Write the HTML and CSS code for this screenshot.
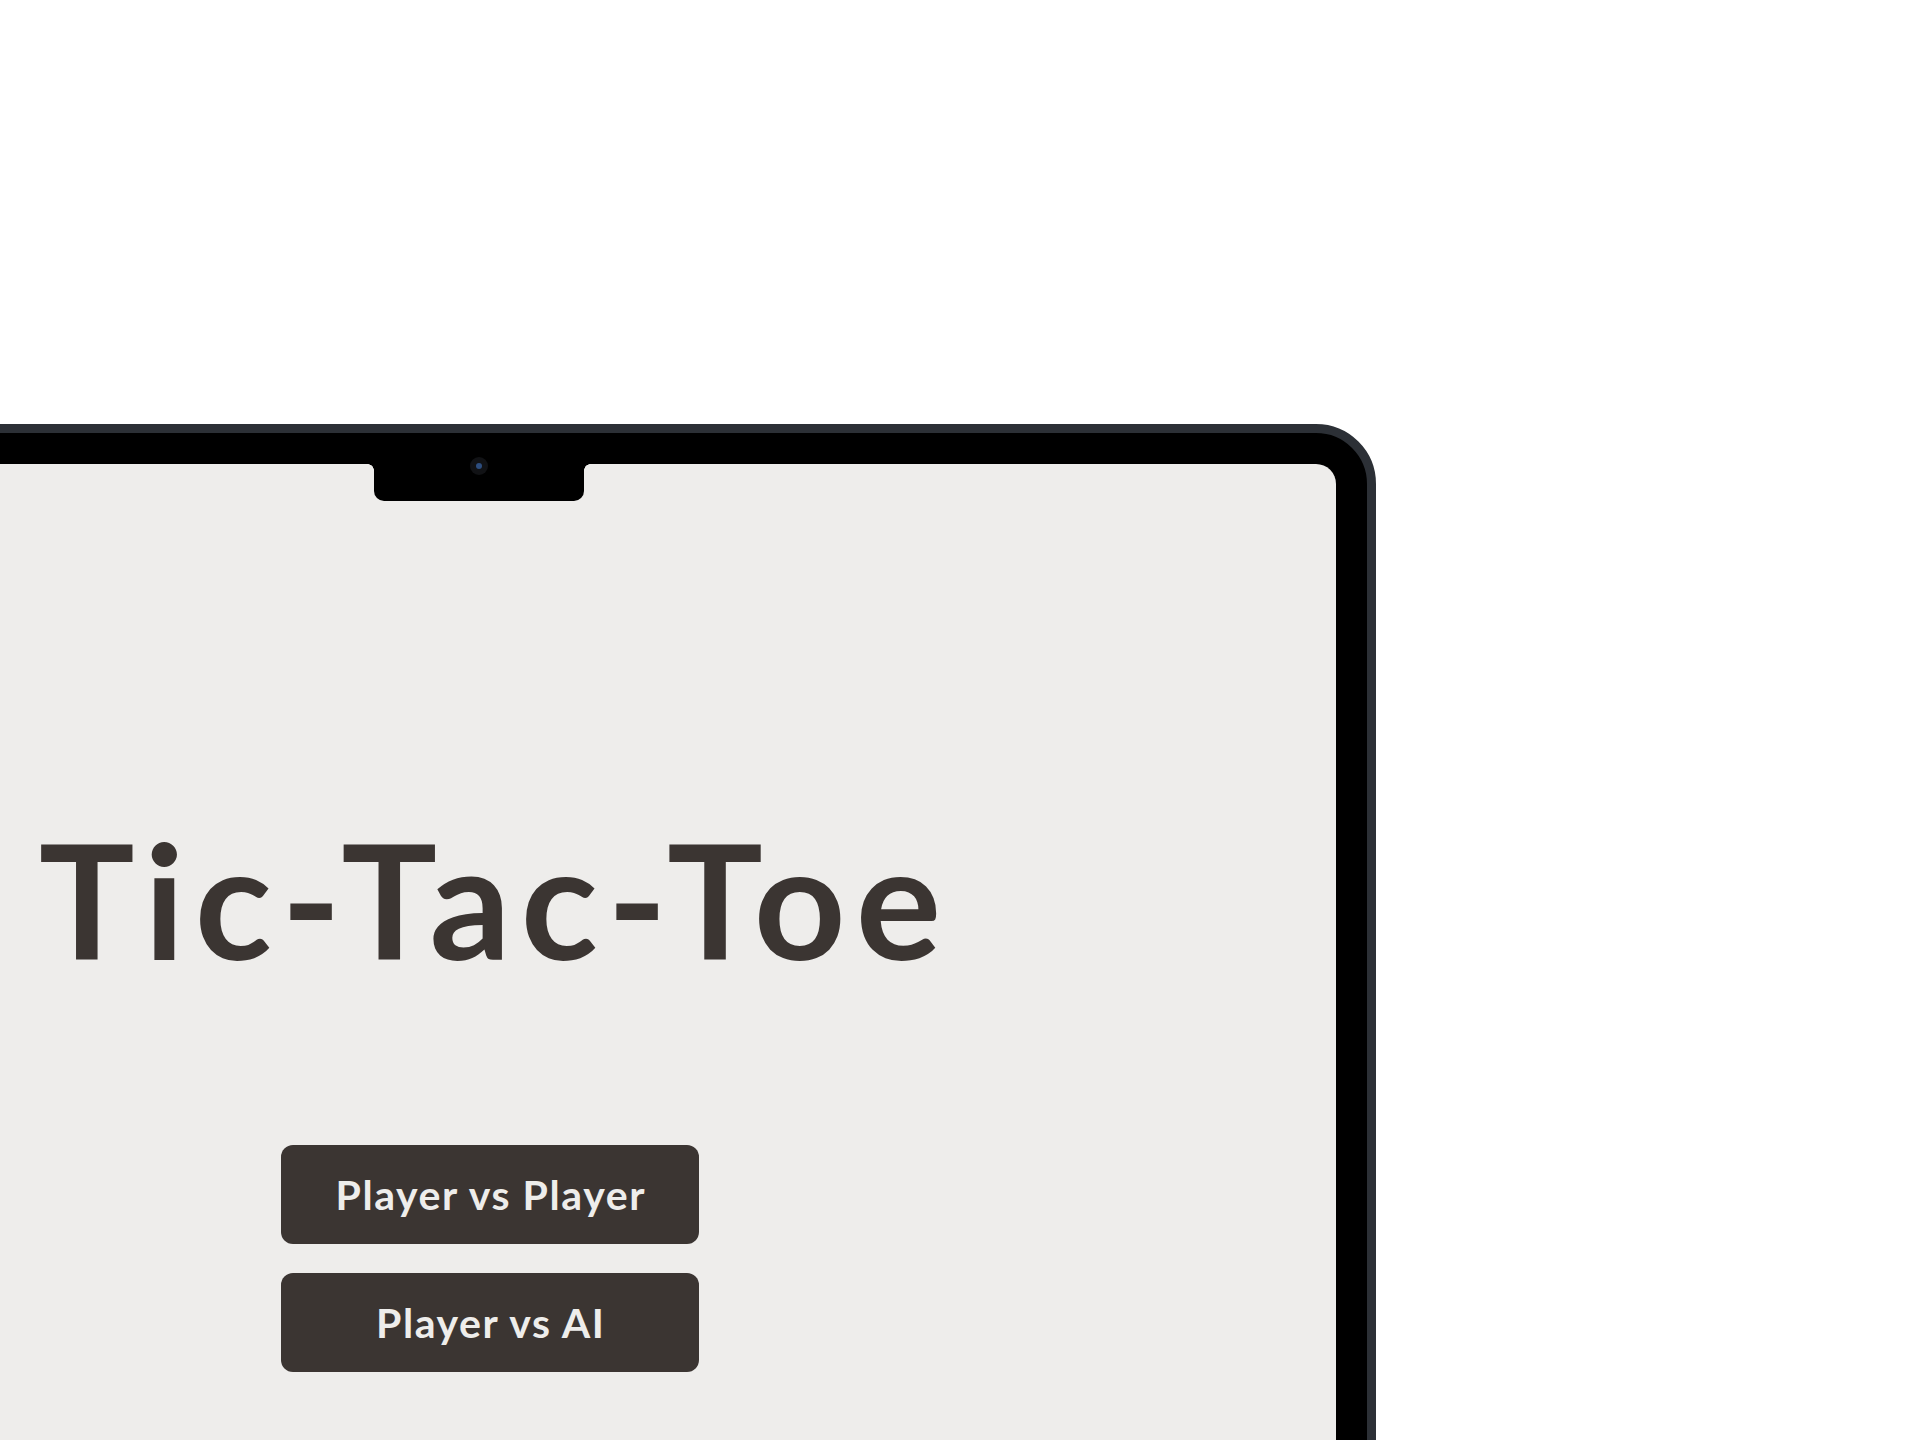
FILE: index.html
```html
<!DOCTYPE html>
<html lang="en">
<head>
<meta charset="utf-8">
<title>Tic-Tac-Toe</title>
<link rel="stylesheet" href="styles.css">
</head>
<body>
<div class="stage">
  <div class="device">
    <div class="screen">
      <div class="notch"><span class="camera"></span></div>
      <main class="menu">
        <h1 class="title">Tic-Tac-Toe</h1>
        <div class="modes">
          <button class="mode-btn" type="button">Player vs Player</button>
          <button class="mode-btn" type="button">Player vs AI</button>
        </div>
      </main>
    </div>
  </div>
</div>
</body>
</html>
```

FILE: styles.css
```css
html, body {
  margin: 0;
  padding: 0;
  background: #ffffff;
  width: 1920px;
  height: 1440px;
  overflow: hidden;
}

.stage {
  padding-top: 424px;
  margin-left: -396px;
}

.device {
  width: 1772px;
  height: 1300px;
  box-sizing: border-box;
  background: #000;
  border: 9px solid #2c3036;
  border-radius: 60px;
  padding: 31px;
}

.screen {
  position: relative;
  height: 1400px;
  background: #eeedeb;
  border-radius: 20px;
}

.notch {
  position: absolute;
  top: 0;
  left: 730px;
  width: 210px;
  height: 37px;
  background: #000;
  border-radius: 0 0 10px 10px;
}

.notch::before,
.notch::after {
  content: "";
  position: absolute;
  top: 0;
  width: 6px;
  height: 6px;
}

.notch::before {
  left: -6px;
  background: radial-gradient(circle at 0 100%, transparent 5.5px, #000 6px);
}

.notch::after {
  right: -6px;
  background: radial-gradient(circle at 100% 100%, transparent 5.5px, #000 6px);
}

.camera {
  position: absolute;
  left: 96px;
  top: -7px;
  width: 18px;
  height: 18px;
  border-radius: 50%;
  background: #111215;
  display: flex;
  align-items: center;
  justify-content: center;
}

.camera::after {
  content: "";
  width: 6px;
  height: 6px;
  border-radius: 50%;
  background: #2d4d7e;
}

.menu {
  display: flex;
  flex-direction: column;
  align-items: center;
  padding-top: 338px;
  font-family: Lato, "Noto Sans", sans-serif;
}

.title {
  margin: 0;
  font-size: 160px;
  font-weight: 700;
  line-height: 1.2;
  color: #3b3532;
  letter-spacing: 10px;
  padding-left: 10px;
}

.modes {
  display: flex;
  flex-direction: column;
  gap: 29px;
  margin-top: 151px;
}

.mode-btn {
  width: 418px;
  height: 99px;
  border: none;
  border-radius: 12px;
  background: #3b3532;
  color: #eeedeb;
  font-family: Lato, "Noto Sans", sans-serif;
  font-size: 41px;
  font-weight: 700;
  letter-spacing: 1.6px;
  padding: 0 0 0 1.6px;
}
```
